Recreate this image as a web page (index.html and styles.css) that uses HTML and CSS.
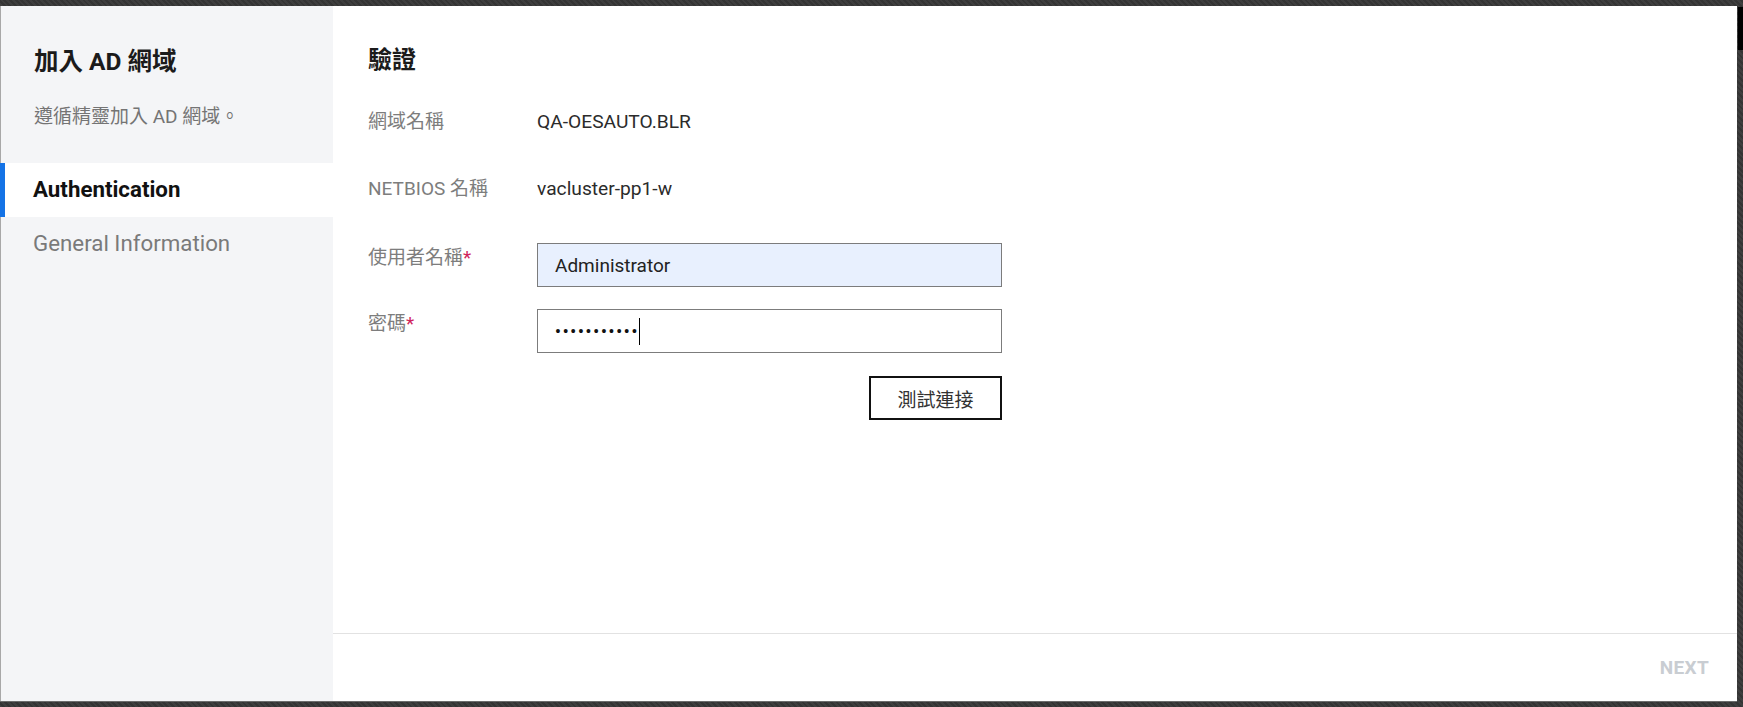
FILE: index.html
```html
<!DOCTYPE html>
<html lang="zh-Hant">
<head>
<meta charset="utf-8">
<title>加入 AD 網域</title>
<link rel="stylesheet" href="styles.css">
</head>
<body>
<div class="frame">
  <div class="dialog">
    <aside class="sidebar">
      <h1 class="side-title">加入 AD 網域</h1>
      <p class="side-sub">遵循精靈加入 AD 網域。</p>
      <nav class="steps">
        <div class="step active">Authentication</div>
        <div class="step">General Information</div>
      </nav>
    </aside>
    <main class="main">
      <section class="content">
        <h2 class="heading">驗證</h2>
        <div class="row info first">
          <div class="label">網域名稱</div>
          <div class="value">QA-OESAUTO.BLR</div>
        </div>
        <div class="row info second">
          <div class="label">NETBIOS 名稱</div>
          <div class="value">vacluster-pp1-w</div>
        </div>
        <div class="row field first-field">
          <div class="label">使用者名稱<span class="req">*</span></div>
          <div class="input filled">Administrator</div>
        </div>
        <div class="row field second-field">
          <div class="label">密碼<span class="req">*</span></div>
          <div class="input"><span class="dots">•••••••••••</span><span class="caret"></span></div>
        </div>
        <div class="row actions">
          <div></div>
          <div class="btn-wrap"><button class="btn" type="button">測試連接</button></div>
        </div>
      </section>
      <footer class="footer">
        <span class="next">NEXT</span>
      </footer>
    </main>
  </div>
  <div class="gutter"><div class="thumb"></div></div>
</div>
</body>
</html>
```
FILE: styles.css
```css
* { box-sizing: border-box; }
html, body { margin: 0; padding: 0; }
body {
  width: 1743px;
  height: 707px;
  overflow: hidden;
  font-family: Roboto, "Noto Sans CJK TC", "Noto Sans", sans-serif;
  background: repeating-linear-gradient(45deg, #3e3e3e 0 2px, #343434 2px 4px);
}
.frame {
  display: flex;
  padding-top: 6px;
  height: 701px;
}
.dialog {
  display: flex;
  width: 1737px;
  height: 695px;
  background: #fff;
  box-shadow: 0 1px 0 #6c6c6c;
}
.sidebar {
  width: 333px;
  flex: none;
  background: #f4f5f7;
  box-shadow: inset 1px 0 0 #a8a8a8;
  padding-top: 40px;
}
.side-title {
  margin: 0;
  padding-left: 34px;
  font-size: 24.5px;
  line-height: 32px;
  font-weight: 700;
  color: #1b1b1b;
}
.side-sub {
  margin: 26px 0 0;
  padding-left: 34px;
  font-size: 19px;
  line-height: 26px;
  color: #747474;
}
.steps {
  margin-top: 33px;
  display: flex;
  flex-direction: column;
}
.step {
  height: 54px;
  display: flex;
  align-items: center;
  padding: 0 0 3px 33px;
  font-size: 22.3px;
  color: #7a7a7a;
}
.step.active {
  background: #fff;
  color: #111;
  font-weight: 700;
  box-shadow: inset 5px 0 0 #1473e6;
}
.main {
  flex: 1;
  display: flex;
  flex-direction: column;
}
.content {
  flex: 1;
  padding: 38px 0 0 35px;
}
.heading {
  margin: 0 0 32px;
  font-size: 24px;
  line-height: 32px;
  font-weight: 700;
  color: #1b1b1b;
}
.row {
  display: grid;
  grid-template-columns: 169px 465px;
}
.label {
  font-size: 19px;
  line-height: 28px;
  color: #7d7d7d;
}
.value {
  font-size: 19.2px;
  line-height: 28px;
  color: #2b2b2b;
}
.info.second { margin-top: 39px; }
.field.first-field { margin-top: 40px; }
.field.second-field { margin-top: 22px; }
.actions { margin-top: 23px; }
.field .label { padding-top: 1px; }
.req { color: #d0245b; }
.input {
  height: 44px;
  border: 1px solid #7c7c7c;
  display: flex;
  align-items: center;
  padding-left: 17px;
  font-size: 19px;
  color: #222;
  background: #fff;
}
.input.filled { background: #e8f0fe; }
.dots {
  font-size: 16px;
  font-weight: 700;
  letter-spacing: 1.9px;
  color: #111;
}
.caret {
  display: inline-block;
  width: 1px;
  height: 27px;
  background: #000;
}
.btn-wrap {
  display: flex;
  justify-content: flex-end;
}
.btn {
  width: 133px;
  height: 44px;
  border: 2px solid #111;
  background: #fff;
  font-family: Roboto, "Noto Sans CJK TC", sans-serif;
  font-size: 19px;
  color: #333;
  padding: 0;
}
.footer {
  height: 68px;
  border-top: 1px solid #e2e2e2;
  display: flex;
  align-items: center;
  justify-content: flex-end;
  padding-right: 28px;
}
.next {
  font-size: 19px;
  font-weight: 700;
  color: #c9cdd2;
  letter-spacing: 0.3px;
}
.gutter {
  width: 6px;
  padding: 1px 0 0 1px;
}
.thumb {
  width: 5px;
  height: 43px;
  background: #000;
}
```
